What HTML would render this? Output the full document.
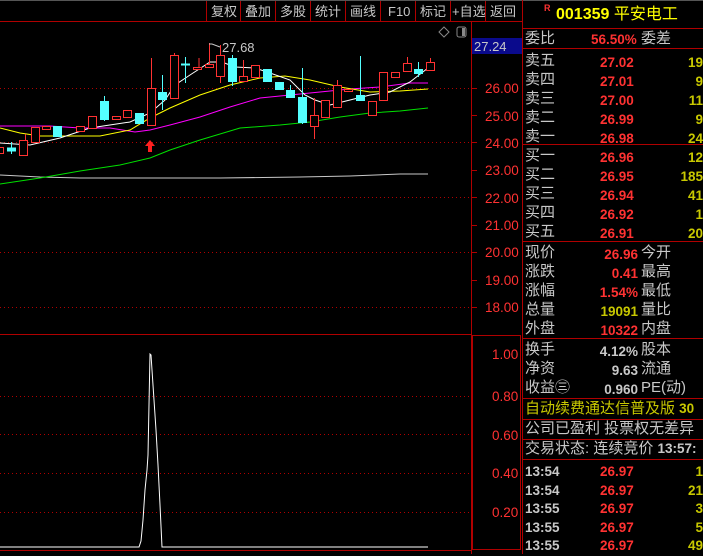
<!DOCTYPE html>
<html><head><meta charset="utf-8"><style>
body{margin:0;background:#000;width:703px;height:554px;overflow:hidden;position:relative;font-family:"Liberation Sans","Noto Sans CJK SC",sans-serif}
.t{position:absolute;white-space:nowrap;line-height:1}
.l{color:#c8c8c8;font-size:15px}
.r{color:#ff3232;font-weight:bold;font-size:13.5px}
.y{color:#c8c800;font-weight:bold;font-size:13.5px}
.w{color:#c8c8c8;font-weight:bold;font-size:13.5px}
.hl{position:absolute;left:522px;width:181px;height:1px;background:#b00000}
</style></head><body>
<svg width="703" height="554" style="position:absolute;left:0;top:0" xmlns="http://www.w3.org/2000/svg">
<rect x="0" y="0" width="703" height="1" fill="#555"/>
<line x1="0" y1="21.5" x2="522" y2="21.5" stroke="#b00000"/>
<g stroke="#b00000"><line x1="206.5" y1="1" x2="206.5" y2="21"/><line x1="240.5" y1="1" x2="240.5" y2="21"/><line x1="275.5" y1="1" x2="275.5" y2="21"/><line x1="310.5" y1="1" x2="310.5" y2="21"/><line x1="345.5" y1="1" x2="345.5" y2="21"/><line x1="380.5" y1="1" x2="380.5" y2="21"/><line x1="415.5" y1="1" x2="415.5" y2="21"/><line x1="450.5" y1="1" x2="450.5" y2="21"/><line x1="485.5" y1="1" x2="485.5" y2="21"/></g>
<g fill="#c8c8c8" font-size="13" font-family="Liberation Sans,Noto Sans CJK SC,sans-serif">
<text x="211" y="16">复权</text><text x="245" y="16">叠加</text><text x="280" y="16">多股</text><text x="315" y="16">统计</text><text x="350" y="16">画线</text><text x="388" y="16">F10</text><text x="420" y="16">标记</text><text x="452" y="16">+自选</text><text x="490" y="16">返回</text></g>
<line x1="471.5" y1="21" x2="471.5" y2="554" stroke="#b00000"/>
<line x1="522.5" y1="0" x2="522.5" y2="554" stroke="#b00000"/>
<line x1="0" y1="334.5" x2="471" y2="334.5" stroke="#b00000"/>
<rect x="472.5" y="335.5" width="48" height="214" fill="none" stroke="#b00000"/>
<line x1="0" y1="550.5" x2="471" y2="550.5" stroke="#b00000"/>
<rect x="472" y="38" width="50" height="16" fill="#0a0a8c"/>
<text x="474" y="51" fill="#c8c8c8" font-size="13" font-family="Liberation Sans,sans-serif">27.24</text>
<path d="M444 27l5 5-5 5-5-5z" fill="none" stroke="#888"/>
<rect x="457" y="27" width="9" height="10" rx="2" fill="none" stroke="#888"/><rect x="462" y="28" width="3" height="8" fill="#888"/>
<g stroke="#b00000" stroke-dasharray="1,3">
<line x1="0" y1="88.5" x2="471" y2="88.5"/><line x1="0" y1="142.5" x2="471" y2="142.5"/><line x1="0" y1="197.5" x2="471" y2="197.5"/><line x1="0" y1="252.5" x2="471" y2="252.5"/><line x1="0" y1="307.5" x2="471" y2="307.5"/>
<line x1="0" y1="396.5" x2="471" y2="396.5"/><line x1="0" y1="434.5" x2="471" y2="434.5"/><line x1="0" y1="473.5" x2="471" y2="473.5"/><line x1="0" y1="512.5" x2="471" y2="512.5"/></g>
<g fill="#ff3232" font-size="13.5" font-family="Liberation Sans,sans-serif">
<text x="485" y="93">26.00</text><text x="485" y="121">25.00</text><text x="485" y="148">24.00</text><text x="485" y="175">23.00</text><text x="485" y="203">22.00</text><text x="485" y="230">21.00</text><text x="485" y="257">20.00</text><text x="485" y="285">19.00</text><text x="485" y="312">18.00</text>
<text x="492" y="359">1.00</text><text x="492" y="401">0.80</text><text x="492" y="440">0.60</text><text x="492" y="478">0.40</text><text x="492" y="517">0.20</text></g>
<g stroke="#b00000"><line x1="472" y1="88.5" x2="477" y2="88.5"/><line x1="472" y1="115.5" x2="477" y2="115.5"/><line x1="472" y1="142.5" x2="477" y2="142.5"/><line x1="472" y1="170.5" x2="477" y2="170.5"/><line x1="472" y1="197.5" x2="477" y2="197.5"/><line x1="472" y1="225.5" x2="477" y2="225.5"/><line x1="472" y1="252.5" x2="477" y2="252.5"/><line x1="472" y1="280.5" x2="477" y2="280.5"/><line x1="472" y1="307.5" x2="477" y2="307.5"/></g>
<g fill="none" stroke-width="1">
<polyline stroke="#c8c8c8" points="0,175 40,177 80,178 150,178 220,178 300,177 350,176 400,174 428,174"/>
<polyline stroke="#00e000" points="0,184 40,178 80,171 120,165 150,158 170,150 200,140 240,128 280,125 310,122 340,117 370,113 400,111 428,108"/>
<polyline stroke="#ff00ff" points="0,126 50,126 80,128 110,128 135,132 150,130 170,125 200,117 230,107 260,98 290,95 320,92 350,89 380,87 410,83 428,83"/>
<polyline stroke="#ffff00" points="0,128 20,133 40,136 100,136 130,130 150,118 170,108 200,95 230,85 260,78 285,76 310,80 340,87 370,92 400,91 428,89"/>
<polyline stroke="#fff" points="0,143 30,145 60,138 90,128 130,122 150,113 165,100 175,85 190,75 210,62 222,62 235,67 255,68 270,73 290,80 305,95 315,100 330,105 350,100 370,95 390,92 410,82 428,68"/>
</g>
<g stroke="#ff3232" fill="#000">
<rect x="-2.5" y="147.5" width="6" height="6"/><rect x="19.5" y="140.5" width="8" height="15"/><rect x="31.5" y="127.5" width="8" height="15"/><rect x="42.5" y="126.5" width="8" height="3"/><rect x="76.5" y="126.5" width="8" height="5"/><rect x="88.5" y="116.5" width="8" height="12"/><rect x="112.5" y="116.5" width="8" height="3"/><rect x="123.5" y="110.5" width="8" height="7"/><rect x="147.5" y="88.5" width="8" height="37"/><rect x="170.5" y="55.5" width="8" height="43"/><rect x="193.5" y="67.5" width="8" height="2"/><rect x="205.5" y="64.5" width="8" height="3"/><rect x="216.5" y="55.5" width="8" height="21"/><rect x="239.5" y="76.5" width="8" height="5"/><rect x="251.5" y="65.5" width="8" height="12"/><rect x="310.5" y="115.5" width="8" height="11"/><rect x="321.5" y="100.5" width="8" height="17"/><rect x="333.5" y="85.5" width="8" height="22"/><rect x="344.5" y="89.5" width="8" height="2"/><rect x="368.5" y="101.5" width="8" height="14"/><rect x="379.5" y="72.5" width="8" height="28"/><rect x="391.5" y="72.5" width="8" height="5"/><rect x="403.5" y="63.5" width="8" height="8"/><rect x="426.5" y="62.5" width="8" height="8"/>
<path d="M151.5 58V88M174.5 53V55M209.5 43V64M220.5 45V55M220.5 77V83M243.5 60V76M314.5 98V115M314.5 127V139M337.5 80V85M25.5 134V140M199 58V67M407.5 57V63M430.5 58V62"/>
</g>
<g fill="#54ffff" stroke="#54ffff">
<rect x="7.5" y="148" width="8" height="3"/><rect x="53.5" y="126.5" width="8" height="10"/><rect x="100.5" y="101.5" width="8" height="18"/><rect x="135.5" y="113.5" width="8" height="10"/><rect x="158.5" y="92.5" width="8" height="7"/><rect x="181.5" y="64" width="8" height="1"/><rect x="228.5" y="58.5" width="8" height="23"/><rect x="263.5" y="69.5" width="8" height="12"/><rect x="275.5" y="82.5" width="8" height="7"/><rect x="286.5" y="90.5" width="8" height="7"/><rect x="298.5" y="97.5" width="8" height="25"/><rect x="356.5" y="95.5" width="8" height="5"/><rect x="414.5" y="69.5" width="8" height="4"/>
<path d="M11.5 142V154M104.5 96V121M162.5 75V110M185.5 57V83M232.5 55V86M302.5 68V124M360.5 56V95M418.5 62V77M290.5 85V90"/>
</g>
<path d="M150 140l-5 6h3v6h4v-6h3z" fill="#ff2020"/>
<path d="M209 44h3l8 3" stroke="#c8c8c8" fill="none"/>
<text x="222" y="52" fill="#c8c8c8" font-size="13" font-family="Liberation Sans,sans-serif">27.68</text>
<polyline fill="none" stroke="#fff" points="0,547 139,547 141,541 143,520 145,490 147,470 148,455 150,354 151,355 152,370 154,400 156,430 158,465 160,505 162,547 428,547"/>
</svg>
<div class="t" style="left:544px;top:4px;color:#ff3232;font-size:9px;font-weight:bold">R</div>
<div class="t" style="left:556px;top:7px;color:#ffff00;font-size:16px;font-weight:bold">001359 <span style="font-weight:normal">平安电工</span></div>
<div class="hl" style="top:28px"></div>
<div class="t l" style="left:525px;top:31px">委比</div><div class="t r" style="left:591px;top:33px">56.50%</div><div class="t l" style="left:641px;top:31px">委差</div>
<div class="hl" style="top:48px"></div>
<div class="t l" style="left:525px;top:51px;line-height:19px">卖五<br>卖四<br>卖三<br>卖二<br>卖一</div>
<div class="t r" style="left:600px;top:53px;line-height:19px">27.02<br>27.01<br>27.00<br>26.99<br>26.98</div>
<div class="t y" style="right:0;top:53px;line-height:19px;text-align:right">19<br>9<br>11<br>9<br>24</div>
<div class="hl" style="top:144px"></div>
<div class="t l" style="left:525px;top:146px;line-height:19px">买一<br>买二<br>买三<br>买四<br>买五</div>
<div class="t r" style="left:600px;top:148px;line-height:19px">26.96<br>26.95<br>26.94<br>26.92<br>26.91</div>
<div class="t y" style="right:0;top:148px;line-height:19px;text-align:right">12<br>185<br>41<br>1<br>20</div>
<div class="hl" style="top:241px"></div>
<div class="t l" style="left:525px;top:243px;line-height:19px">现价<br>涨跌<br>涨幅<br>总量<br>外盘</div>
<div class="t" style="right:65px;top:245px;line-height:19px;text-align:right;font-size:13.5px;font-weight:bold"><span style="color:#ff3232">26.96</span><br><span style="color:#ff3232">0.41</span><br><span style="color:#ff3232">1.54%</span><br><span style="color:#c8c800">19091</span><br><span style="color:#ff3232">10322</span></div>
<div class="t l" style="left:641px;top:243px;line-height:19px">今开<br>最高<br>最低<br>量比<br>内盘</div>
<div class="hl" style="top:338px"></div>
<div class="t l" style="left:525px;top:340px;line-height:19px">换手<br>净资<br>收益㊂</div>
<div class="t w" style="right:65px;top:342px;line-height:19px;text-align:right">4.12%<br>9.63<br>0.960</div>
<div class="t l" style="left:641px;top:340px;line-height:19px">股本<br>流通<br>PE(动)</div>
<div class="hl" style="top:398px"></div>
<div class="t" style="left:525px;top:401px;color:#c8c800;font-size:15px">自动续费通达信普及版 <b style="font-size:13.5px">30</b></div>
<div class="hl" style="top:419px"></div>
<div class="t l" style="left:525px;top:421px">公司已盈利 投票权无差异</div>
<div class="hl" style="top:439px"></div>
<div class="t l" style="left:525px;top:441px">交易状态: 连续竞价 <b style="font-size:13.5px">13:57:</b></div>
<div class="hl" style="top:459px"></div>
<div class="t w" style="left:525px;top:463px;line-height:18.5px">13:54<br>13:54<br>13:55<br>13:55<br>13:55</div>
<div class="t r" style="left:600px;top:463px;line-height:18.5px">26.97<br>26.97<br>26.97<br>26.97<br>26.97</div>
<div class="t y" style="right:0;top:463px;line-height:18.5px;text-align:right">1<br>21<br>3<br>5<br>49</div>
</body></html>
